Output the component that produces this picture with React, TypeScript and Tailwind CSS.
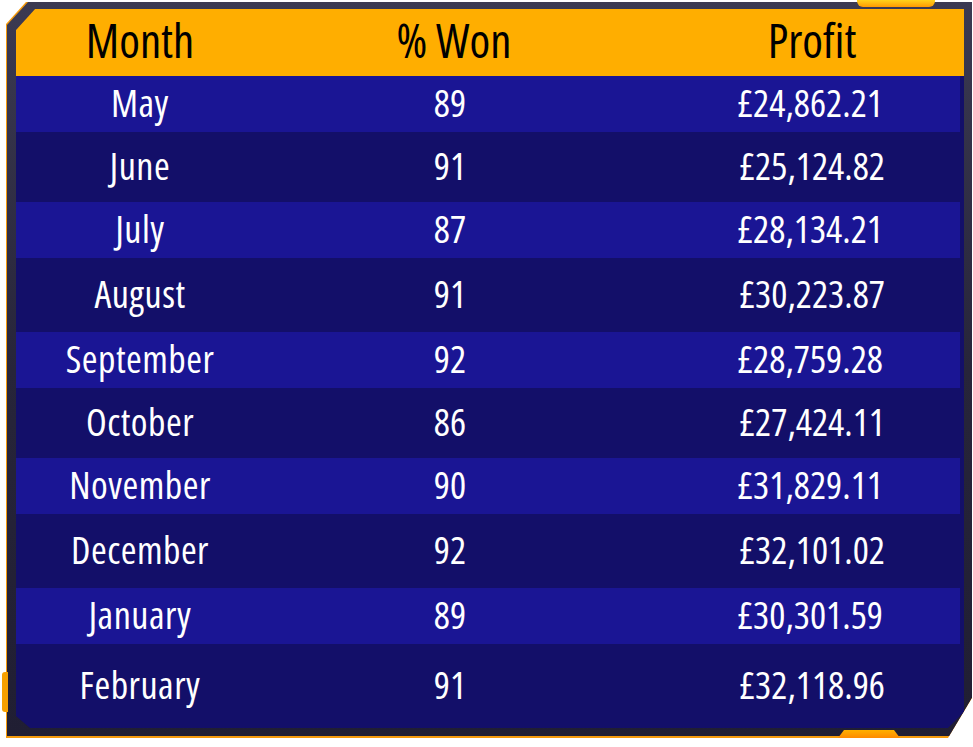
import React from 'react'

type Row = { month: string; won: number; profit: string; h: string; bright: boolean }

const rows: Row[] = [
  { month: 'May', won: 89, profit: '£24,862.21', h: 'h-[56px]', bright: true },
  { month: 'June', won: 91, profit: '£25,124.82', h: 'h-[70px]', bright: false },
  { month: 'July', won: 87, profit: '£28,134.21', h: 'h-[56px]', bright: true },
  { month: 'August', won: 91, profit: '£30,223.87', h: 'h-[74px]', bright: false },
  { month: 'September', won: 92, profit: '£28,759.28', h: 'h-[56px]', bright: true },
  { month: 'October', won: 86, profit: '£27,424.11', h: 'h-[70px]', bright: false },
  { month: 'November', won: 90, profit: '£31,829.11', h: 'h-[56px]', bright: true },
  { month: 'December', won: 92, profit: '£32,101.02', h: 'h-[74px]', bright: false },
  { month: 'January', won: 89, profit: '£30,301.59', h: 'h-[56px]', bright: true },
  { month: 'February', won: 91, profit: '£32,118.96', h: 'flex-1', bright: false },
]

export default function App() {
  return (
    <div className="relative w-[973px] h-[747px] bg-white pt-[2px] pl-[6px] font-['Open_Sans',sans-serif] [font-stretch:75%]">
      {/* orange edge glow */}
      <div className="w-[966px] h-[736px] pl-[1px] pb-[2px] bg-[#f59a0c] [clip-path:polygon(20px_0,100%_0,100%_calc(100%-40px),calc(100%-24px)_100%,0_100%,0_22px)]">
        {/* dark frame */}
        <div className="w-[965px] h-[734px] pt-[7px] pl-[9px] pr-[8px] pb-[8px] bg-gradient-to-b from-[#3b3a52] via-[#27253a] to-[#201e33] [clip-path:polygon(21px_0,100%_0,100%_calc(100%-38px),calc(100%-22px)_100%,0_100%,0_23px)]">
          <div className="w-[948px] h-[719px] flex flex-col bg-[#130f69] [clip-path:polygon(19px_0,100%_0,100%_calc(100%-16px),calc(100%-16px)_100%,14px_100%,0_calc(100%-12px),0_21px)]">
            <div className="h-[67px] shrink-0 grid grid-cols-[248px_372px_1fr] items-center pb-[4px] bg-[#ffae00] text-black text-[47px] font-medium leading-none">
              <div className="text-center">Month</div>
              <div className="text-center pl-[8px]">% Won</div>
              <div className="text-center pl-[24px]">Profit</div>
            </div>
            {rows.map(r => (
              <div
                key={r.month}
                className={`${r.h} shrink-0 grid grid-cols-[248px_372px_1fr] items-center pb-[4px] text-white text-[38px] font-medium leading-none ${r.bright ? 'bg-[#1a1594] mr-[4px]' : ''}`}
              >
                <div className="text-center tracking-[0.5px]">{r.month}</div>
                <div className="text-center">{r.won}</div>
                <div className="text-center pl-[24px]">{r.profit}</div>
              </div>
            ))}
          </div>
        </div>
      </div>
      {/* orange accents over the frame */}
      <div className="absolute left-[857px] top-0 w-[78px] h-[7px] rounded-b-[6px] bg-gradient-to-b from-[#ffd21a] to-[#ff9a00]" />
      <div className="absolute left-[2px] top-[672px] w-[6px] h-[40px] rounded-l-[3px] bg-[#f7a000]" />
      <div className="absolute left-[838px] top-[730px] w-[62px] h-[8px] bg-gradient-to-b from-[#ffb000] to-[#ff8a00] [clip-path:polygon(6px_0,calc(100%-6px)_0,100%_100%,0_100%)]" />
    </div>
  )
}
